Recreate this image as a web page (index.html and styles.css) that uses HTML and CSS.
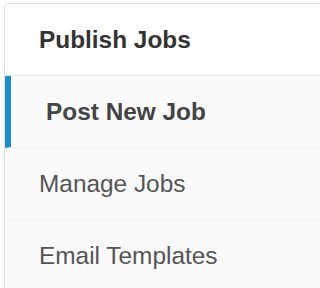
FILE: index.html
```html
<!DOCTYPE html>
<html>
<head>
<meta charset="utf-8">
<link rel="stylesheet" href="styles.css">
</head>
<body>
<div class="card">
  <div class="card-header">Publish Jobs</div>
  <ul class="menu">
    <li class="menu-item active">Post New Job</li>
    <li class="menu-item">Manage Jobs</li>
    <li class="menu-item">Email Templates</li>
  </ul>
</div>
</body>
</html>
```

FILE: styles.css
```css
html, body {
  margin: 0;
  padding: 0;
  background: #fff;
}
body {
  font-family: "Liberation Sans", Arial, sans-serif;
}
.card {
  margin: 3px 0 0 4px;
  border: 1px solid #e1e1e1;
  border-right: none;
  border-radius: 5px 0 0 5px;
  background: #fafafa;
  overflow: hidden;
}
.card-header {
  height: 71px;
  line-height: 71px;
  padding-left: 34px;
  background: #fff;
  border-bottom: 1px solid #e8e8e8;
  font-size: 24.4px;
  font-weight: bold;
  color: #333;
}
.menu {
  list-style: none;
  margin: 0;
  padding: 0;
}
.menu-item {
  height: 71px;
  line-height: 71px;
  padding-left: 34px;
  border-bottom: 1px solid #f3f3f3;
  font-size: 24.4px;
  color: #555;
  background: #fafafa;
}
.menu-item.active {
  border-left: 6px solid #1a8fc9;
  padding-left: 35px;
  font-weight: bold;
  color: #444;
}
```
